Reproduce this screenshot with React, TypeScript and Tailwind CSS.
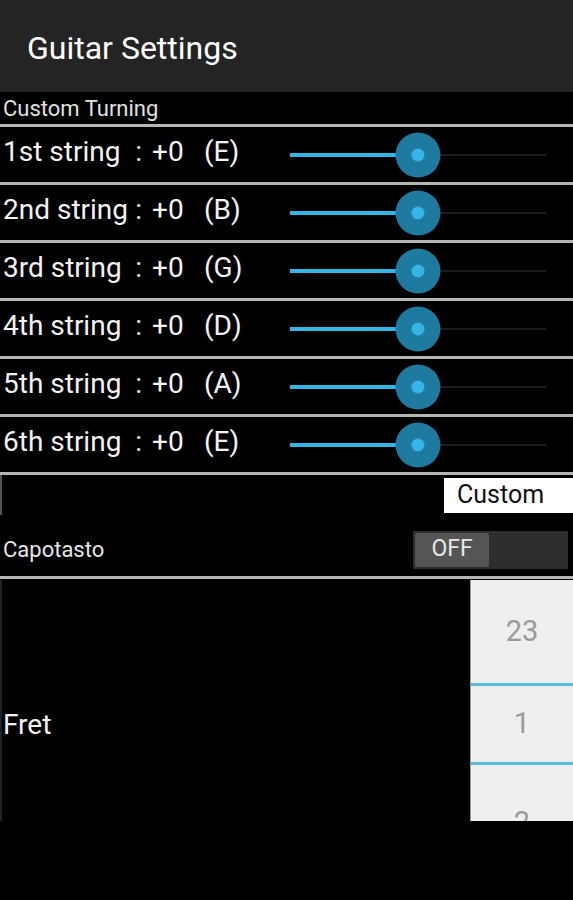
import React from 'react';

const strings = [
  { label: '1st string', note: '(E)' },
  { label: '2nd string', note: '(B)' },
  { label: '3rd string', note: '(G)' },
  { label: '4th string', note: '(D)' },
  { label: '5th string', note: '(A)' },
  { label: '6th string', note: '(E)' },
];

function Slider() {
  return (
    <div className="relative h-full w-[256px] ml-auto mr-[27px]">
      <div className="absolute left-0 right-0 top-1/2 -translate-y-1/2 h-[2px] bg-[#1c1c1c]" />
      <div className="absolute left-0 w-[127px] top-1/2 -translate-y-1/2 h-[4px] bg-[#33b5e5]" />
      <div className="absolute left-[128px] top-1/2 -translate-x-1/2 -translate-y-1/2 w-[45px] h-[45px] rounded-full bg-[#1f7aa0] flex items-center justify-center">
        <div className="w-[13px] h-[13px] rounded-full bg-[#33b5e5]" />
      </div>
    </div>
  );
}

export default function App() {
  return (
    <div className="w-[573px] h-[900px] bg-black overflow-hidden" style={{ fontFamily: 'Roboto, "Liberation Sans", sans-serif' }}>
      <div className="h-[92px] bg-[#242424] flex items-center px-[27px] pt-[3px]">
        <h1 className="text-[32px] text-white">Guitar Settings</h1>
      </div>

      <div className="h-[32px] flex items-center px-[3px] text-[22px] text-[#e0e0e0]">Custom Turning</div>
      <div className="h-[3px] bg-[#b5b5b5]" />

      {strings.map((s) => (
        <div key={s.label}>
          <div className="h-[55px] flex items-center pl-[3px] text-[28px] text-[#f2f2f2]">
            <div className="flex pb-[5px]">
              <span className="w-[129px]">{s.label}</span>
              <span className="w-[20px] text-right pr-[10px]">:</span>
              <span className="w-[52px]">+0</span>
              <span>{s.note}</span>
            </div>
            <Slider />
          </div>
          <div className="h-[3px] bg-[#b5b5b5]" />
        </div>
      ))}

      <div className="h-[40px] flex items-center border-l-2 border-[#555] justify-end">
        <div className="w-[129px] h-[35px] bg-white flex items-center pl-[13px] text-[25px] text-[#111]">Custom</div>
      </div>

      <div className="h-[61px] flex items-center justify-between pl-[3px] pr-[5px] pt-[8px]">
        <span className="text-[22px] text-[#e6e6e6]">Capotasto</span>
        <div className="w-[155px] h-[38px] bg-[#2e2e2e] p-[2px] flex">
          <div className="w-[74px] h-full bg-[#555] rounded-[2px] flex items-center justify-center text-[23px] text-[#e8e8e8]">OFF</div>
        </div>
      </div>
      <div className="h-[3px] bg-[#b5b5b5]" />

      <div className="h-[241px] mt-[1px] flex border-l-2 border-[#222]">
        <div className="flex-1 flex items-center pl-[1px] pt-[48px] text-[28px] text-[#f2f2f2]">Fret</div>
        <div className="w-[103px] h-full bg-[#efefef] border-l border-[#999] flex flex-col overflow-hidden text-[#9a9a9a] text-[29px]">
          <div className="h-[103px] flex items-center justify-center shrink-0">23</div>
          <div className="h-[3px] bg-[#5ab9df] shrink-0" />
          <div className="h-[76px] flex items-center justify-center shrink-0">1</div>
          <div className="h-[3px] bg-[#5ab9df] shrink-0" />
          <div className="h-[76px] flex items-start justify-center pt-[36px] shrink-0">2</div>
        </div>
      </div>
    </div>
  );
}
